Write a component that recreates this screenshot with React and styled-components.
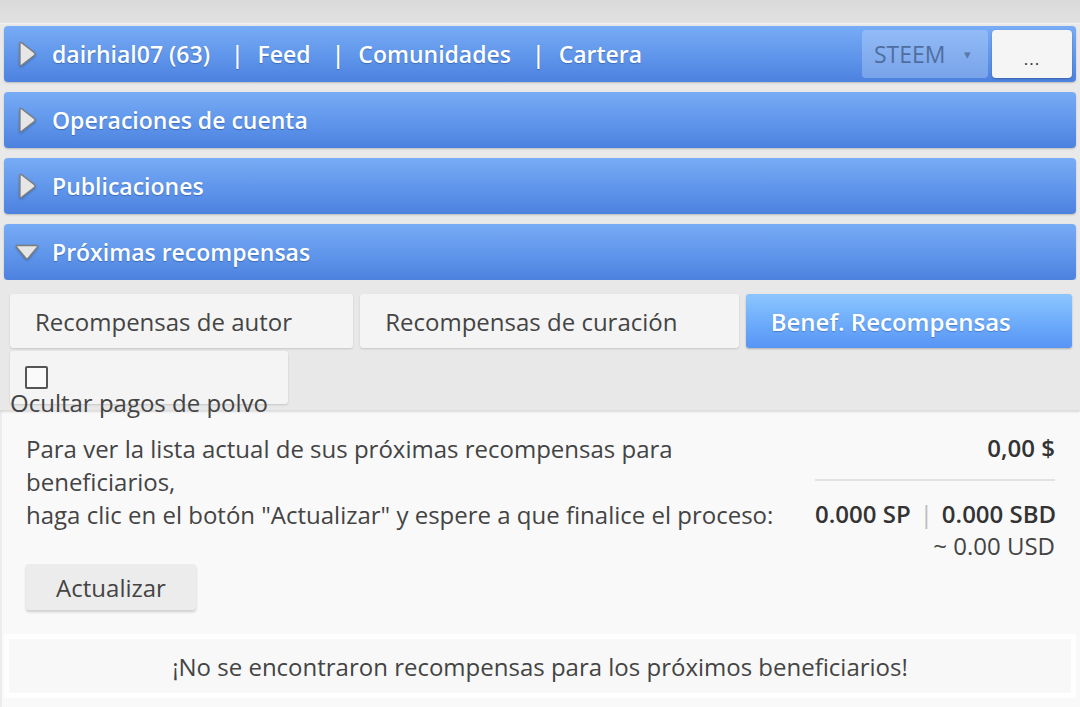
import React from 'react';
import styled, { createGlobalStyle, css } from 'styled-components';

const GlobalStyle = createGlobalStyle`
  html, body {
    margin: 0;
    padding: 0;
    background: #dedede;
  }
  body {
    font-family: 'Open Sans', 'Liberation Sans', sans-serif;
    color: #444;
  }
`;

const Page = styled.div`
  padding-top: 24px;
  background: linear-gradient(#d9d9d9, #e2e2e2 24px);
  height: 707px;
  box-sizing: border-box;
  overflow: hidden;
`;

const Shell = styled.div`
  background: #e9e9e9;
  padding: 2px 4px 0;
  box-shadow: 0 -1px 0 #f2f2f2;
`;

const SectionBar = styled.div`
  display: flex;
  align-items: center;
  height: 56px;
  margin-bottom: ${props => (props.last ? '0' : '10px')};
  padding: 0 4px 0 10px;
  border-radius: 4px;
  background: linear-gradient(#78acf6, #5f95ea 55%, #4c82df);
  box-shadow: 0 1px 2px rgba(0, 0, 0, 0.2);
  color: #fff;
  font-size: 23px;
  font-weight: 600;
  text-shadow: 0 1px 1px rgba(0, 40, 100, 0.35);
  box-sizing: border-box;
`;

const Arrow = styled.svg`
  flex: none;
  width: 26px;
  height: 26px;
  margin-right: 12px;
  filter: drop-shadow(0 1px 1px rgba(0, 0, 0, 0.25));
`;

const NavLink = styled.span`
  white-space: nowrap;
`;

const NavSep = styled.span`
  margin: 0 14px 0 21px;
`;

const BarTools = styled.div`
  margin-left: auto;
  display: flex;
  gap: 4px;
  align-self: stretch;
  padding: 4px 0;
`;

const CurrencySelect = styled.div`
  display: flex;
  align-items: center;
  width: 126px;
  padding-left: 12px;
  box-sizing: border-box;
  border-radius: 4px;
  background: rgba(200, 220, 250, 0.35);
  color: #4f6e9f;
  font-size: 23px;
  font-weight: 400;
  text-shadow: none;

  &::after {
    content: '▾';
    font-size: 13px;
    margin-left: 18px;
    color: #5a78a8;
  }
`;

const MoreButton = styled.div`
  display: flex;
  align-items: flex-end;
  justify-content: center;
  width: 80px;
  padding-bottom: 8px;
  box-sizing: border-box;
  border-radius: 4px;
  background: #f5f5f5;
  box-shadow: 0 1px 2px rgba(0, 0, 0, 0.25);
  color: #333;
  font-size: 17px;
  font-weight: 400;
  text-shadow: none;
  letter-spacing: 1px;
`;

const TabArea = styled.div`
  background: #e8e8e8;
  margin: 0 -4px;
  padding: 14px 8px 6px 10px;
  box-shadow: 0 2px 2px rgba(0, 0, 0, 0.12);
  position: relative;
  z-index: 1;
`;

const TabRow = styled.div`
  display: flex;
  gap: 7px;
`;

const Tab = styled.div`
  flex: 1 1 auto;
  display: flex;
  align-items: center;
  height: 54px;
  padding: 0 25px;
  border-radius: 3px;
  font-size: 24px;
  white-space: nowrap;
  ${props =>
    props.active
      ? css`
          background: linear-gradient(#8cc6ff, #6aa8fa 60%, #5894f4);
          color: #fff;
          font-weight: 600;
          text-shadow: 0 1px 1px rgba(0, 40, 100, 0.3);
          box-shadow: 0 1px 2px rgba(0, 0, 0, 0.25);
        `
      : css`
          background: #f4f4f4;
          color: #444;
          box-shadow: 0 1px 2px rgba(0, 0, 0, 0.15);
        `}
`;

const FilterBox = styled.div`
  width: 278px;
  height: 53px;
  margin-top: 3px;
  padding-top: 15px;
  box-sizing: border-box;
  border-radius: 3px;
  background: #f4f4f4;
  box-shadow: 0 1px 2px rgba(0, 0, 0, 0.15);
`;

const CheckBox = styled.span`
  display: block;
  width: 23px;
  height: 23px;
  margin-left: 15px;
  border: 2px solid #555;
  border-radius: 2px;
  box-sizing: border-box;
  background: #fafafa;
`;

const CheckLabel = styled.div`
  font-size: 24px;
  line-height: 28px;
  color: #444;
  white-space: nowrap;
`;

const Content = styled.div`
  background: #f9f9f9;
  margin: 0 -4px;
  padding: 22px 25px 20px 24px;
  border-left: 2px solid #ececec;
`;

const InfoRow = styled.div`
  display: flex;
`;

const InfoText = styled.div`
  flex: 1;
  font-size: 24px;
  line-height: 33px;
  color: #444;
`;

const Totals = styled.div`
  width: 240px;
  flex: none;
  text-align: right;
  font-size: 24px;
  line-height: 32px;
  color: #333;
`;

const Amount = styled.div`
  font-weight: 600;
  padding-bottom: 15px;
  border-bottom: 2px solid #e2e2e2;
  margin-bottom: 17px;
`;

const Split = styled.div`
  font-weight: 600;
  white-space: nowrap;
`;

const SplitBar = styled.span`
  font-weight: 400;
  color: #bbb;
  margin: 0 9px;
`;

const Usd = styled.div`
  color: #444;
`;

const RefreshButton = styled.div`
  display: inline-flex;
  align-items: center;
  justify-content: center;
  width: 170px;
  height: 46px;
  margin-top: 2px;
  border-radius: 3px;
  background: #ececec;
  box-shadow: 0 2px 3px rgba(0, 0, 0, 0.18);
  font-size: 24px;
  color: #444;
`;

const EmptyNotice = styled.div`
  margin: 24px -21px 0 -22px;
  border: 5px solid #fff;
  border-radius: 3px;
  background: #f8f8f8;
  height: 64px;
  box-sizing: border-box;
  display: flex;
  align-items: center;
  justify-content: center;
  font-size: 24px;
  color: #444;
`;

function Caret({ open }) {
  return (
    <Arrow viewBox="0 0 24 24">
      {open ? (
        <path
          d="M2.5 7.5 Q1.5 6 3.5 6 H20.5 Q22.5 6 21.5 7.5 L13.2 17.5 Q12 19 10.8 17.5 Z"
          fill="#e6e6e6"
          stroke="#7d7d7d"
          strokeWidth="1.3"
        />
      ) : (
        <path
          d="M5.5 2.6 Q5.5 0.6 7.3 1.8 L18.6 10.6 Q20.2 12 18.6 13.4 L7.3 22.2 Q5.5 23.4 5.5 21.4 Z"
          fill="#e6e6e6"
          stroke="#7d7d7d"
          strokeWidth="1.3"
        />
      )}
    </Arrow>
  );
}

const navLinks = ['Feed', 'Comunidades', 'Cartera'];
const sections = ['Operaciones de cuenta', 'Publicaciones'];
const tabs = [
  { label: 'Recompensas de autor' },
  { label: 'Recompensas de curación' },
  { label: 'Benef. Recompensas', active: true }
];

export default function App() {
  return (
    <Page>
      <GlobalStyle />
      <Shell>
        <SectionBar>
          <Caret />
          <NavLink>dairhial07 (63)</NavLink>
          {navLinks.map(link => (
            <React.Fragment key={link}>
              <NavSep>|</NavSep>
              <NavLink>{link}</NavLink>
            </React.Fragment>
          ))}
          <BarTools>
            <CurrencySelect>STEEM</CurrencySelect>
            <MoreButton>...</MoreButton>
          </BarTools>
        </SectionBar>

        {sections.map(title => (
          <SectionBar key={title}>
            <Caret />
            {title}
          </SectionBar>
        ))}

        <SectionBar last>
          <Caret open />
          Próximas recompensas
        </SectionBar>

        <TabArea>
          <TabRow>
            {tabs.map(tab => (
              <Tab key={tab.label} active={tab.active}>
                {tab.label}
              </Tab>
            ))}
          </TabRow>
          <FilterBox>
            <CheckBox />
            <CheckLabel>Ocultar pagos de polvo</CheckLabel>
          </FilterBox>
        </TabArea>

        <Content>
          <InfoRow>
            <InfoText>
              Para ver la lista actual de sus próximas recompensas para beneficiarios,
              <br />
              haga clic en el botón "Actualizar" y espere a que finalice el proceso:
            </InfoText>
            <Totals>
              <Amount>0,00 $</Amount>
              <Split>
                0.000 SP<SplitBar>|</SplitBar>0.000 SBD
              </Split>
              <Usd>~ 0.00 USD</Usd>
            </Totals>
          </InfoRow>
          <RefreshButton>Actualizar</RefreshButton>
          <EmptyNotice>¡No se encontraron recompensas para los próximos beneficiarios!</EmptyNotice>
        </Content>
      </Shell>
    </Page>
  );
}
